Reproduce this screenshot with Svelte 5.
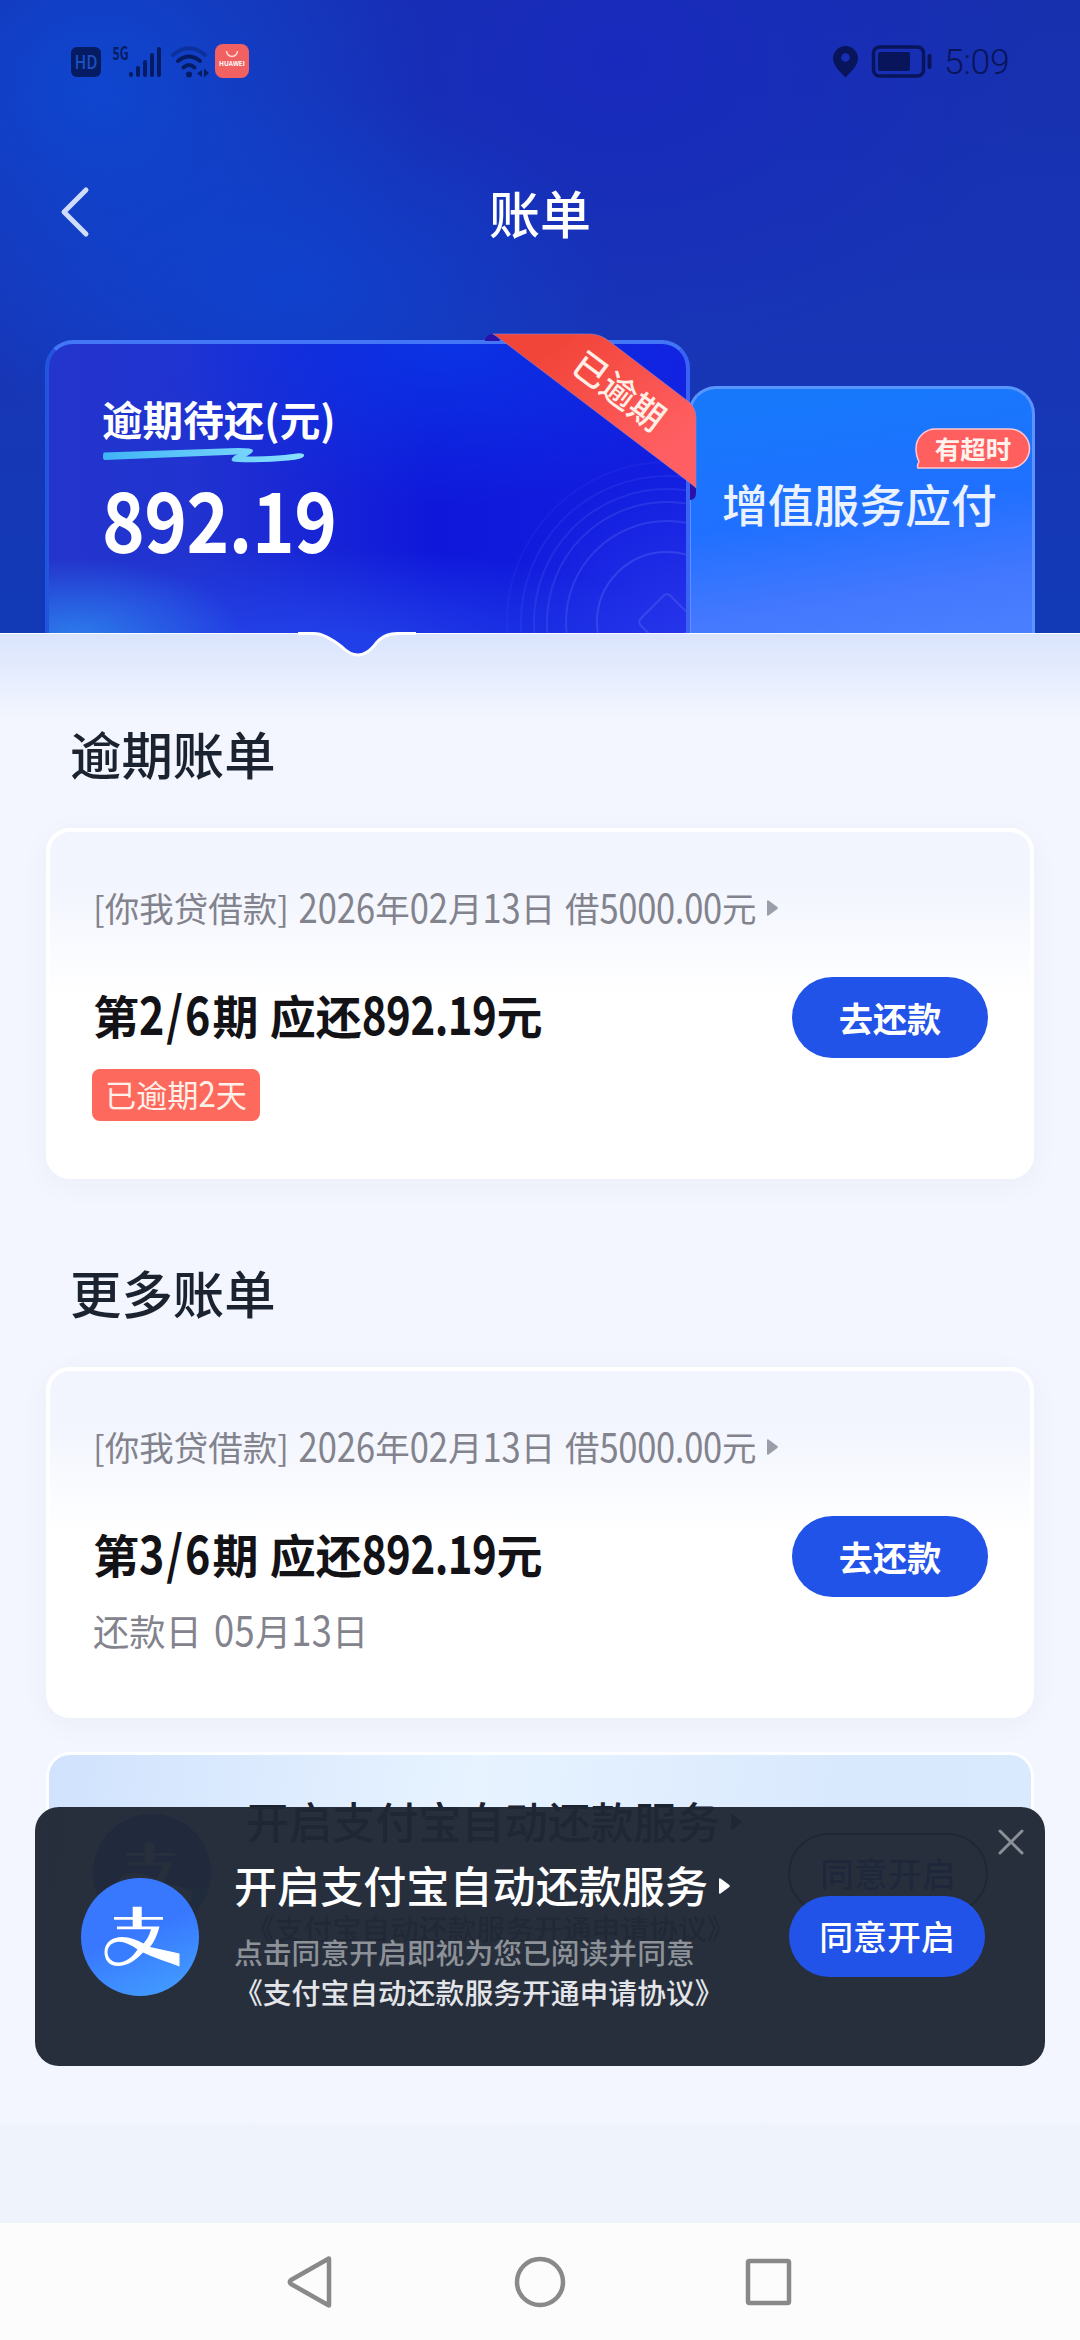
<script lang="ts">
    type Bill = {
        section: string
        loan: string
        amount: string
        status: string
        overdue: boolean
    }

    const bills: Bill[] = [
        {
            section: '逾期账单',
            loan: '[你我贷借款] 2026年02月13日 借5000.00元',
            amount: '第2/6期 应还892.19元',
            status: '已逾期2天',
            overdue: true
        },
        {
            section: '更多账单',
            loan: '[你我贷借款] 2026年02月13日 借5000.00元',
            amount: '第3/6期 应还892.19元',
            status: '还款日 05月13日',
            overdue: false
        }
    ]

    const rings = [70, 101, 120, 133, 146, 160]

    let showToast = $state(true)

    // digits are set taller than the chinese glyphs
    function split(text: string) {
        return text.split(/([\d./]+)/).filter(t => t !== '')
    }
</script>

{#snippet mixed(text: string)}{#each split(text) as part}{#if /\d/.test(part)}<span class="num" class:money={part.includes('.')}>{part}</span>{:else}{part}{/if}{/each}{/snippet}

{#snippet arrow()}
    <svg class="arrow" width="13" height="18" viewBox="0 0 13 18"><path d="M1 2.2Q1 .6 2.5 1.4L11.4 8Q12.4 9 11.4 10L2.5 16.6Q1 17.4 1 15.8Z" fill="currentColor"/></svg>
{/snippet}

{#snippet alipay()}
    <svg class="alipay" width="118" height="118" viewBox="0 0 118 118">
        <defs>
            <linearGradient id="ali" x1="0.3" y1="0" x2="0.7" y2="1">
                <stop offset="0.45" stop-color="#3878ff"/>
                <stop offset="1" stop-color="#429bff"/>
            </linearGradient>
        </defs>
        <circle cx="59" cy="59" r="59" fill="url(#ali)"/>
        <path fill="#fff" d="M51.7 28.7H60.7V39H82V41.8H60.7V48.5H78.5C76 58 72.5 65 69 69L98.5 75.5V88.5C86 84 73 79.5 62 74.5C54 83 46 88 37 88C28 88 23.5 82 23.5 74C23.5 64 32 59 41 59C49 59 56 62 62.5 65.5C66 62 68.5 57 70 51.3H36V48.5H51.7V41.8H33V39H51.7Z"/>
        <path fill="#387cff" d="M56.5 71.5C49 66.5 42 63 36 64C30 65 26.5 69 26.5 74C26.5 80 31 84.5 37 84.5C45 84.5 51.5 79 56.5 71.5Z"/>
    </svg>
{/snippet}

<div class="screen">
    <header>
        <div class="status">
            <svg width="180" height="36" viewBox="0 0 180 36">
                <g fill="#061c62">
                    <rect x="0" y="3" width="30" height="30" rx="6"/>
                    <text x="15" y="25" font-size="19" font-weight="500" text-anchor="middle" fill="#1c50c4" textLength="23" lengthAdjust="spacingAndGlyphs">HD</text>
                    <text x="41.5" y="15.5" font-size="18" font-weight="700" textLength="16" lengthAdjust="spacingAndGlyphs">5G</text>
                    <rect x="58" y="28" width="4" height="5" rx="2"/>
                    <rect x="65" y="22" width="4" height="11" rx="2"/>
                    <rect x="72" y="16" width="4" height="17" rx="2"/>
                    <rect x="79" y="9" width="4" height="24" rx="2"/>
                    <rect x="86" y="3" width="4" height="30" rx="2"/>
                    <circle cx="118" cy="30.5" r="3"/>
                    <path d="M131 26V33L126 29.5ZM133 24.5V33.5L138 29Z"/>
                </g>
                <g fill="none" stroke="#061c62" stroke-width="4" stroke-linecap="round">
                    <path d="M102 11Q118 -2.5 134 11" stroke-opacity=".4"/>
                    <path d="M107 17Q118 8 129 17"/>
                    <path d="M112.5 23.5Q118 18.5 123.5 23.5"/>
                </g>
                <rect x="144" y="0" width="34" height="34" rx="8" fill="#f26161"/>
                <path d="M155.5 7A5.5 5.5 0 0 0 166.5 7" fill="none" stroke="#ffd5d2" stroke-width="1.5"/>
                <text x="161" y="22" font-size="6.5" font-weight="700" text-anchor="middle" fill="#fff" textLength="26">HUAWEI</text>
            </svg>
            <div class="right">
                <svg width="100" height="36" viewBox="0 0 100 36">
                    <path fill="#08155a" fill-rule="evenodd" d="M12.5 2A12.5 12.5 0 0 1 25 14.5C25 22 17 28.5 12.5 33.5C8 28.5 0 22 0 14.5A12.5 12.5 0 0 1 12.5 2ZM12.5 9.2A4.3 4.3 0 1 0 12.5 17.8A4.3 4.3 0 1 0 12.5 9.2Z"/>
                    <rect x="40.5" y="3" width="50" height="29" rx="6" fill="none" stroke="#08155a" stroke-width="3.5"/>
                    <rect x="45" y="8" width="32" height="19" rx="2" fill="#08155a"/>
                    <rect x="94.5" y="10" width="4" height="15" rx="2" fill="#08155a"/>
                </svg>
                <span class="time">5:09</span>
            </div>
        </div>

        <nav>
            <button class="back" aria-label="返回">
                <svg width="30" height="52" viewBox="0 0 30 52"><path d="M26 4L4 26L26 48" fill="none" stroke="#cfdcfb" stroke-width="5" stroke-linecap="round" stroke-linejoin="round"/></svg>
            </button>
            <h1>账单</h1>
        </nav>

        <div class="tabs">
            <div class="tab main">
                <svg class="rings" width="180" height="200" viewBox="461 433 180 200" fill="none" stroke="#5a6cf5">
                    {#each rings as r, i}
                        <circle cx="622" cy="622" {r} stroke-width="2" stroke-opacity={0.38 - i * 0.055}/>
                    {/each}
                    <rect x="601" y="601" width="42" height="42" rx="5" transform="rotate(45 622 622)" stroke-width="2" stroke-opacity=".4"/>
                </svg>
                <h2>逾期待还(元)</h2>
                <svg class="underline" width="204" height="20" viewBox="0 0 204 20">
                    <defs>
                        <linearGradient id="ul"><stop stop-color="#3fb4f5"/><stop offset="1" stop-color="#8ae0ff"/></linearGradient>
                    </defs>
                    <path d="M1 4.5L120 0.5Q150 -1 150 2.5Q150 5 143 8.5Q170 8.5 190 6Q202 4 201 8Q200 11 185 12.5Q160 15 135 14Q127 14 129 10.500Q131 7 135 6.5L2 12Q0 12 0 9Q0 4.5 1 4.5Z" fill="url(#ul)"/>
                </svg>
                <p class="total">892.19</p>
                <svg class="ribbon" width="214" height="170" viewBox="484 332 214 170">
                    <defs>
                        <linearGradient id="rb" x1="0" y1="0" x2="1" y2="1"><stop offset="0.2" stop-color="#f2453a"/><stop offset="0.8" stop-color="#ff5f62"/></linearGradient>
                    </defs>
                    <path d="M485 341Q485 334 494 334L500 341ZM690 482L696 486V493Q696 500 690 500Z" fill="#2a12a8"/>
                    <path d="M493 334H590Q600 334 609 341L689 402Q696 408 696 418V488Q695 487 690 483L503 341Q497 336 493 334Z" fill="url(#rb)" stroke="#9c83c0" stroke-opacity=".6"/>
                    <text x="619" y="404" text-anchor="middle" font-size="35" font-weight="500" fill="#ffefe6" transform="rotate(37 619 391)">已逾期</text>
                </svg>
            </div>
            <div class="tab side">
                <span>增值服务应付</span>
                <em>
                    <svg class="bubble" width="116" height="41" viewBox="0 0 116 41"><path d="M21 1H95A19.5 19.5 0 0 1 95 40H3Q1.500 38.500 4 33.500Q1 28 1 20.500A19.500 19.500 0 0 1 21 1Z" fill="#ff5f5f" stroke="#ffc9d0" stroke-width="1.5"/></svg>
                    <i>有超时</i>
                </em>
            </div>
        </div>
        <svg class="notch" width="120" height="28" viewBox="0 0 120 28">
            <path d="M0 0H16Q27 1.5 44 15Q52 23 60 23Q68 23 76 14Q84 1.5 100 0H120" fill="#213fe8"/>
            <path d="M0 1.5H16Q27 1.5 44 15Q52 23 60 23Q68 23 76 14Q84 1.5 100 1.5H118" fill="none" stroke="#fff" stroke-width="3"/>
        </svg>
    </header>

    <main>
        {#each bills as bill}
            <h3>{bill.section}</h3>
            <section class="card">
                <div class="loan">{@render mixed(bill.loan)}{@render arrow()}</div>
                <div class="row">
                    <strong>{@render mixed(bill.amount)}</strong>
                    <button class="pay">去还款</button>
                </div>
                <div class={bill.overdue ? 'tag' : 'date'}>{@render mixed(bill.status)}</div>
            </section>
        {/each}

        <section class="auto">
            {@render alipay()}
            <div class="words">
                <b>开启支付宝自动还款服务{@render arrow()}</b>
                <p class="agreement">《支付宝自动还款服务开通申请协议》</p>
            </div>
            <button class="open outline">同意开启</button>
        </section>
    </main>

    {#if showToast}
        <aside>
            {@render alipay()}
            <div class="words">
                <b>开启支付宝自动还款服务{@render arrow()}</b>
                <p>点击同意开启即视为您已阅读并同意</p>
                <p class="agreement">《支付宝自动还款服务开通申请协议》</p>
            </div>
            <button class="open">同意开启</button>
            <button class="close" aria-label="关闭" onclick={() => showToast = false}>
                <svg width="28" height="28" viewBox="0 0 28 28"><path d="M3 3L25 25M25 3L3 25" stroke="#8b9098" stroke-width="3" stroke-linecap="round"/></svg>
            </button>
        </aside>
    {/if}

    <footer>
        <svg width="48" height="54" viewBox="0 0 48 54"><path d="M42 4V50Q42 51 41 50L4 29Q1.5 27 4 25L41 4Q42 3 42 4Z"/></svg>
        <svg width="54" height="54" viewBox="0 0 54 54"><circle cx="27" cy="27" r="23"/></svg>
        <svg width="48" height="54" viewBox="0 0 48 54"><rect x="3" y="6" width="41" height="42" rx="1.5"/></svg>
    </footer>
</div>

<style>
:global(body){
    margin: 0;
}

*{
    box-sizing: border-box;
}

.screen{
    position: relative;
    display: flex;
    flex-direction: column;
    width: 1080px;
    height: 2340px;
    overflow: hidden;
    background: linear-gradient(#f3f6fe 2122px, #eff3fb 2126px);
    font-family: "Noto Sans CJK SC", sans-serif;
    color: #1b2230;
}

h1, h2, h3, p{
    margin: 0;
    font-weight: 500;
}

button{
    padding: 0;
    border: 0;
    background: none;
    font-family: inherit;
}

svg{
    display: block;
    flex: none;
    overflow: visible;
}

.num{
    display: inline-block;
    transform: scaleY(1.17);
    transform-origin: 50% 72%;
}

header{
    position: relative;
    height: 633px;
    padding-top: 44px;
    background:
        radial-gradient(ellipse 330px 300px at 100px 90px, #0f46d0 0%, rgba(15, 70, 208, 0) 100%),
        radial-gradient(ellipse 330px 200px at 290px 290px, #1041cd 0%, rgba(16, 65, 205, 0) 100%),
        radial-gradient(ellipse 420px 300px at 620px 60px, #182abd 0%, rgba(24, 42, 189, 0) 100%),
        linear-gradient(#1730ae, #1835b6 50%, #123ab6);
}

.status{
    display: flex;
    justify-content: space-between;
    height: 36px;
    padding: 0 69px 0 71px;
}

.right{
    display: flex;
    gap: 11px;
}

.time{
    width: 67px;
    font-family: Roboto, sans-serif;
    font-size: 35.5px;
    font-weight: 300;
    line-height: 37px;
    letter-spacing: -.3px;
    color: #08155a;
}

nav{
    display: grid;
    grid-template-columns: 120px 1fr 120px;
    align-items: center;
    height: 100px;
    margin-top: 82px;
}

.back{
    margin-left: 60px;
}

h1{
    font-size: 51px;
    line-height: 98px;
    text-align: center;
    color: #fff;
}

.tabs{
    display: flex;
    align-items: flex-end;
    height: 293px;
    margin-top: 78px;
    padding-left: 45px;
}

.tab{
    position: relative;
    border: 4px solid;
    border-bottom: 0;
    border-radius: 28px 28px 0 0;
}

.main{
    z-index: 1;
    width: 645px;
    height: 293px;
    padding: 45px 0 0 53px;
    border-color: #4376f6 #3a62f4 #1f58dc #2255de;
    background:
        radial-gradient(ellipse 170px 80px at 4% 102%, rgba(45, 128, 236, .95) 0%, rgba(45, 128, 236, 0) 100%),
        radial-gradient(ellipse 300px 160px at 62% 0, rgba(10, 56, 230, .85) 0%, rgba(10, 56, 230, 0) 100%),
        radial-gradient(ellipse 380px 100px at 42% 105%, #2444ea 0%, rgba(36, 68, 234, 0) 100%),
        radial-gradient(ellipse 180px 160px at 100% 100%, #2635ea 0%, rgba(38, 53, 234, 0) 100%),
        linear-gradient(90deg, #2335cc, #2133d0 22%, #0f18da 60%, #131fe0);
}

.rings{
    position: absolute;
    right: 0;
    bottom: 0;
    overflow: hidden;
}

h2{
    font-size: 40.6px;
    font-weight: 700;
    line-height: 60px;
    color: #fff;
}

.underline{
    margin: -1px 0 0 1px;
}

.total{
    width: max-content;
    margin-top: 9px;
    font-size: 72.5px;
    font-weight: 700;
    line-height: 80px;
    color: #fff;
    letter-spacing: -.5px;
    transform: scaleY(1.15);
}

.ribbon{
    position: absolute;
    top: -12px;
    right: -12px;
}

.side{
    width: 347px;
    height: 247px;
    margin-left: -2px;
    border-width: 3px;
    border-color: #5796ff #5c94ff #4a86ff;
    background: linear-gradient(172deg, #1778fc 10%, #2070ff 50%, #4478fe 80%, #4a80ff);
}

.side span{
    display: block;
    margin: 81px 0 0 31px;
    font-size: 45.8px;
    font-weight: 500;
    line-height: 66px;
    color: #eaf2ff;
}

.side em{
    position: absolute;
    top: 39px;
    right: 1px;
    width: 116px;
    height: 41px;
    font-size: 25.5px;
    font-weight: 700;
    line-height: 39px;
    text-align: center;
    color: #fff3ee;
}

.side i{
    position: relative;
    font-style: normal;
}

.bubble{
    position: absolute;
    left: 0;
    top: 0;
}

.notch{
    position: absolute;
    z-index: 2;
    left: 298px;
    top: 632px;
}

main{
    padding: 87px 46px 0;
    border-top: 1px solid #fff;
    background: linear-gradient(#d9e4fd, #f3f6fe 85px);
}

h3{
    height: 64px;
    padding-left: 24px;
    font-size: 51.4px;
    line-height: 64px;
}

.card{
    height: 351px;
    margin: 43px 0 81px;
    padding: 51px 42px 0 43px;
    border: 4px solid #fff;
    border-radius: 24px;
    background: linear-gradient(#f2f5fe 15%, #fff 48%);
    box-shadow: 0 6px 30px rgba(40, 50, 40, .04);
}

.loan{
    display: flex;
    align-items: center;
    height: 48px;
    font-size: 34.5px;
    word-spacing: 2px;
    white-space: pre;
    color: #83838d;
}

.loan .money{
    letter-spacing: -.3px;
}

.loan .arrow{
    margin: 1px 0 0 10px;
    color: #9a9ea8;
}

.row{
    display: flex;
    justify-content: space-between;
    align-items: center;
    height: 81px;
    margin-top: 46px;
}

strong{
    margin-top: -8px;
    font-size: 46px;
    font-weight: 700;
    word-spacing: 1px;
    white-space: pre;
    color: #121217;
}

strong .num{
    font-size: 43px;
    letter-spacing: 2px;
    transform: scaleY(1.22);
}

strong .money{
    font-size: 42px;
    letter-spacing: -.5px;
    transform: scaleY(1.25);
}

.pay{
    width: 196px;
    height: 81px;
    padding-bottom: 2px;
    border-radius: 41px;
    background: #2253e8;
    font-size: 34.2px;
    font-weight: 700;
    color: #fff;
}

.tag{
    width: 168px;
    height: 52px;
    margin: 11px 0 0 -1px;
    border-radius: 8px;
    background: #fd695d;
    font-size: 31.2px;
    line-height: 49px;
    text-align: center;
    color: #fff0ea;
}

.date{
    height: 60px;
    margin-top: 3px;
    font-size: 36.3px;
    line-height: 60px;
    word-spacing: 4px;
    white-space: pre;
    color: #83838d;
}

.date .num{
    letter-spacing: .3px;
}

.card:nth-of-type(2){
    margin-bottom: 0;
}

.auto{
    display: flex;
    height: 250px;
    margin-top: 34px;
    padding: 59px 43px 0 44px;
    border: 3px solid #fdfeff;
    border-bottom: 0;
    border-radius: 24px;
    background: linear-gradient(100deg, #d0e2fd, #e7f3ff 42%, #d8e8fd 80%, #dbebfe);
}

.words{
    flex: none;
    width: 552px;
    font-size: 28.8px;
    line-height: 40px;
    white-space: nowrap;
}

.words b{
    display: flex;
    align-items: center;
    height: 60px;
    font-size: 43.1px;
    font-weight: 500;
}

.words .arrow{
    margin: 3px 0 0 10px;
}

.auto .words{
    margin: -24px -10px 0 35px;
}

.auto .agreement{
    margin-top: 58px;
    color: #4a5160;
}

.open{
    flex: none;
    width: 196px;
    height: 81px;
    padding-bottom: 3px;
    border-radius: 41px;
    background: #2253e8;
    font-size: 33.9px;
    font-weight: 500;
    color: #fff;
}

.outline{
    width: 200px;
    margin-top: 19px;
    border: 2px solid #1c2c60;
    background: none;
    color: #2253e8;
}

aside{
    position: absolute;
    left: 35px;
    top: 1807px;
    display: flex;
    width: 1010px;
    height: 259px;
    padding: 71px 0 0 46px;
    border-radius: 24px;
    background: rgba(31, 39, 52, .96);
    color: #fff;
}

aside .words{
    width: 555px;
    margin: -24px 0 0 35px;
    color: #8d9198;
}

aside b{
    color: #fff;
}

aside p:first-of-type{
    margin-top: 18px;
}

aside .agreement{
    color: #e3e5e9;
}

aside .open{
    margin-top: 18px;
}

.close{
    position: absolute;
    top: 21px;
    right: 20px;
}

footer{
    display: flex;
    justify-content: center;
    gap: 178px;
    height: 117px;
    margin-top: auto;
    padding-top: 32px;
    background: #fcfcfc;
}

footer svg{
    fill: none;
    stroke: #898989;
    stroke-width: 4.5;
    stroke-linejoin: round;
}
</style>
